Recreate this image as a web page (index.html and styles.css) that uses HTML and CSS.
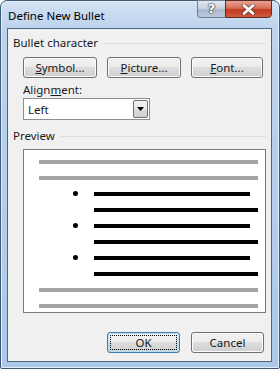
FILE: index.html
```html
<!DOCTYPE html>
<html lang="en">

<head>
  <meta charset="UTF-8" />
  <title>Define New Bullet</title>
  <link rel="stylesheet" href="styles.css">
</head>

<body>
  <div class="ventana">
    <div class="barra">
      <span class="titulo">Define New Bullet</span>
      <div class="controles">
        <div class="btn-ayuda">?</div>
        <div class="btn-cerrar">
          <svg width="15" height="11" viewBox="0 0 15 11">
            <path d="M3 1.5 L12 9.5 M12 1.5 L3 9.5" stroke="#3b3b3b" stroke-width="4.5" stroke-linecap="round" opacity="0.55" />
            <path d="M3 1.5 L12 9.5 M12 1.5 L3 9.5" stroke="#fff" stroke-width="2.6" stroke-linecap="round" />
          </svg>
        </div>
      </div>
    </div>

    <div class="cliente">
      <div class="grupo">
        <span>Bullet character</span>
        <div class="linea"></div>
      </div>

      <div class="fila-botones">
        <button class="boton"><u>S</u>ymbol...</button>
        <button class="boton"><u>P</u>icture...</button>
        <button class="boton"><u>F</u>ont...</button>
      </div>

      <div class="etiqueta">Align<u>m</u>ent:</div>
      <div class="combo">
        <span>Left</span>
        <div class="flecha">
          <svg width="7" height="4" viewBox="0 0 7 4"><path d="M0 0 L7 0 L3.5 4 Z" fill="#000" /></svg>
        </div>
      </div>

      <div class="grupo grupo-preview">
        <span>Preview</span>
        <div class="linea"></div>
      </div>

      <div class="preview">
        <div class="renglon"><div class="raya gris"></div></div>
        <div class="renglon"><div class="raya gris"></div></div>
        <div class="renglon item"><i class="punto"></i><div class="raya negra corta"></div></div>
        <div class="renglon item"><div class="raya negra"></div></div>
        <div class="renglon item"><i class="punto"></i><div class="raya negra corta"></div></div>
        <div class="renglon item"><div class="raya negra"></div></div>
        <div class="renglon item"><i class="punto"></i><div class="raya negra corta"></div></div>
        <div class="renglon item"><div class="raya negra"></div></div>
        <div class="renglon"><div class="raya gris"></div></div>
        <div class="renglon"><div class="raya gris"></div></div>
      </div>

      <div class="acciones">
        <button class="boton principal"><span class="foco">OK</span></button>
        <button class="boton">Cancel</button>
      </div>
    </div>
  </div>
</body>

</html>
```

FILE: styles.css
```css
* {
  margin: 0px;
  padding: 0px;
  box-sizing: border-box;
}

body {
  font-family: 'Noto Sans', 'Liberation Sans', sans-serif;
  font-size: 11.5px;
  color: #1a1a1a;
  background: #fff;
}

.ventana {
  width: 280px;
  height: 369px;
  border: 1px solid #3f5a78;
  border-radius: 7px 7px 2px 2px;
  background: linear-gradient(to bottom, #d3e2f3 0px, #bcd3ec 28px, #acc8e8 100%);
  padding: 0px 7px 6px 6px;
  display: flex;
  flex-direction: column;
  box-shadow: inset 0 0 0 1px #e4eefa;
}

.barra {
  height: 27px;
  display: flex;
  justify-content: space-between;
  align-items: flex-start;
}

.titulo {
  padding: 7px 0 0 1px;
  line-height: 16px;
  color: #000;
}

.controles {
  display: flex;
  margin-top: -1px;
}

.btn-ayuda {
  width: 28px;
  height: 18px;
  border: 1px solid #6e7f93;
  border-right: none;
  border-radius: 0 0 0 4px;
  background: linear-gradient(to bottom, #e1e8f1 0%, #c7d3e1 45%, #a9b9cc 55%, #bccbdc 100%);
  color: #fff;
  font-family: 'DejaVu Sans', sans-serif;
  font-weight: bold;
  font-size: 13px;
  line-height: 16px;
  text-align: center;
  text-shadow: 0 0 1px #333, 0 0 1px #333, 0 0 2px #333;
}

.btn-cerrar {
  width: 47px;
  height: 18px;
  border: 1px solid #5a2a24;
  border-radius: 0 0 4px 0;
  background: linear-gradient(to bottom, #e8a393 0%, #d66e58 45%, #c2391f 55%, #d2593c 100%);
  display: flex;
  justify-content: center;
  align-items: center;
}

.cliente {
  flex: 1;
  border: 1px solid #4c6683;
  background: #f0f0f0;
  padding: 6px 5px 0px 5px;
  display: flex;
  flex-direction: column;
}

.grupo {
  display: flex;
  align-items: center;
  gap: 6px;
  height: 16px;
  line-height: 16px;
}

.linea {
  flex: 1;
  height: 1px;
  background: #d5dfe5;
  margin-top: 1px;
}

.fila-botones {
  display: flex;
  gap: 10px;
  margin: 6px 0 0 10px;
}

.boton {
  width: 74px;
  height: 21px;
  font-family: inherit;
  font-size: 11.5px;
  color: #1a1a1a;
  border: 1px solid #707070;
  border-radius: 3px;
  background: linear-gradient(to bottom, #f2f2f2 0%, #ebebeb 50%, #dddddd 50%, #cfcfcf 100%);
  box-shadow: inset 0 0 0 1px #fcfcfc;
  display: flex;
  justify-content: center;
  align-items: center;
  line-height: 16px;
}

.fila-botones .boton:last-child {
  width: 72px;
}

.etiqueta {
  margin: 4px 0 0 10px;
  line-height: 16px;
  height: 16px;
}

.combo {
  width: 127px;
  height: 22px;
  margin-left: 10px;
  background: #fff;
  border: 1px solid #8e8f8f;
  display: flex;
  align-items: center;
  justify-content: space-between;
  padding: 0 1px 0 4px;
}

.flecha {
  width: 15px;
  height: 18px;
  border: 1px solid #707070;
  border-radius: 2px;
  background: linear-gradient(to bottom, #f2f2f2 0%, #ebebeb 50%, #dddddd 50%, #cfcfcf 100%);
  display: flex;
  justify-content: center;
  align-items: center;
}

.grupo-preview {
  margin-top: 8px;
}

.preview {
  margin: 5px 0 0 10px;
  width: 243px;
  height: 164px;
  border: 1px solid #7a7a7a;
  background: #fff;
  padding: 10px 7px 0 0;
  display: flex;
  flex-direction: column;
  gap: 12px;
}

.renglon {
  height: 4px;
  display: flex;
  justify-content: flex-end;
  align-items: center;
  position: relative;
}

.raya {
  height: 4px;
}

.gris {
  width: 219px;
  background: #a4a4a4;
}

.negra {
  width: 164px;
  background: #000;
}

.corta {
  width: 156px;
  margin-right: 8px;
}

.punto {
  position: absolute;
  left: 49px;
  top: -1px;
  width: 5px;
  height: 5px;
  border-radius: 50%;
  background: #000;
}

.acciones {
  display: flex;
  justify-content: flex-end;
  gap: 11px;
  margin: 19px 2px 0 0;
}

.acciones .boton {
  width: 73px;
  height: 21px;
}

.principal {
  border-color: #3c7fb1;
  box-shadow: inset 0 0 0 1px #b8def3;
  padding: 2px;
}

.foco {
  flex: 1;
  align-self: stretch;
  border: 1px dotted #000;
  display: flex;
  justify-content: center;
  align-items: center;
}
```
